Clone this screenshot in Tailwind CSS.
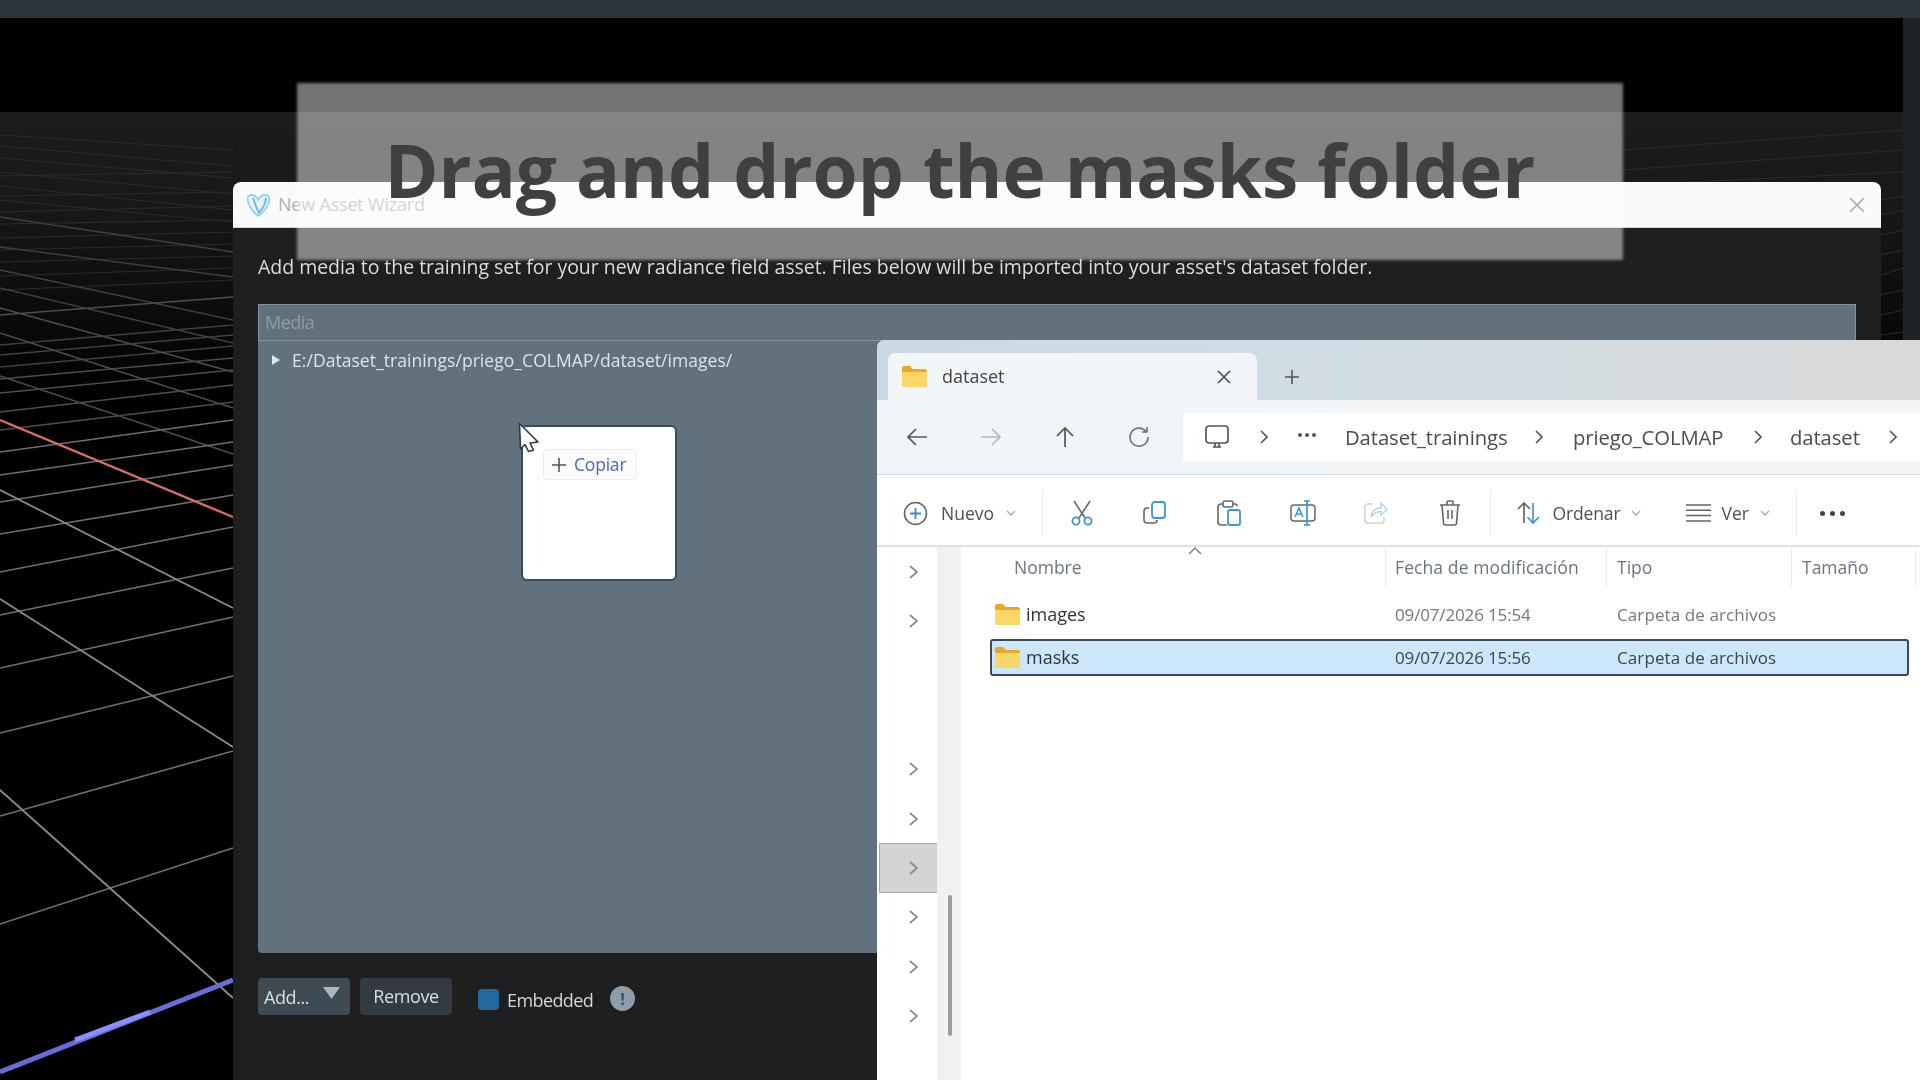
<!DOCTYPE html>
<html>
<head>
<meta charset="utf-8">
<script src="https://cdn.jsdelivr.net/npm/@tailwindcss/browser@4"></script>
</head>
<body class="bg-black">
<div class="relative w-[1920px] h-[1080px] overflow-hidden bg-black flex flex-col font-['Open_Sans',sans-serif]">
  <!-- app top bar -->
  <div class="h-[18px] shrink-0 bg-[#2b3339]"></div>
  <!-- viewport: 3D grid scene -->
  <div class="flex-1 flex">
    <div class="flex-1"></div>
    <div class="w-[17px] bg-[#1e2327]"></div>
  </div>
  <svg class="absolute left-0 top-0 blur-[0.5px]" width="1903" height="1080" viewBox="0 0 1903 1080" fill="none">
    <defs>
      <linearGradient id="haze" x1="0" y1="112" x2="0" y2="400" gradientUnits="userSpaceOnUse">
        <stop offset="0" stop-color="#1c1c1c"/>
        <stop offset="0.3" stop-color="#191919"/>
        <stop offset="0.7" stop-color="#0b0b0b"/>
        <stop offset="1" stop-color="#000"/>
      </linearGradient>
    </defs>
    <rect x="0" y="112" width="1903" height="288" fill="url(#haze)"/>
    <g stroke="#2c2c2c" stroke-width="1">
      <path d="M0 135L233 150M0 146L233 166M0 158L233 178M0 172L233 194M0 186L233 210M0 200L233 222"/>
      <path d="M0 176L233 172M0 196L233 192M0 212L233 206M0 224L233 220M0 238L233 232M0 250L233 244M0 262L233 256M0 276L233 268M0 290L233 280"/>
      <path d="M1623 150L1903 130M1623 170L1903 150M1623 185L1903 172M1881 200L1903 196M1881 215L1903 210M1881 235L1903 230M1881 255L1903 250M1881 275L1903 268M1881 295L1903 290M1881 315L1903 310M1881 335L1903 332"/>
    </g>
    <g stroke="#404040" stroke-width="1.3">
      <path d="M0 217L233 252M0 247L233 277M0 270L233 320M0 288L233 343"/>
      <path d="M0 345L233 325M0 355L233 335M0 367L233 346"/>
    </g>
    <g stroke="#4e4e4e" stroke-width="1.4">
      <path d="M0 315L233 297M0 308L233 372M0 333L233 408M0 376L233 454"/>
      <path d="M0 379L233 358M0 393L233 370M0 412L233 385M0 430L233 402"/>
    </g>
    <g stroke="#707070" stroke-width="1.6">
      <path d="M0 452L233 420M0 475L233 442M0 502L233 465M0 534L233 495M0 572L233 527M0 615L233 568M0 668L233 617M0 733L233 676M0 816L233 751M0 924L233 848"/>
    </g>
    <g stroke="#8c8c86" stroke-width="1.8">
      <path d="M0 490L233 608M0 599L233 747M0 790L233 998"/>
    </g>
    <path d="M0 420L233 517" stroke="#d96c6c" stroke-width="2.4"/>
    <path d="M0 1072L233 980" stroke="#676cd6" stroke-width="5"/>
    <path d="M75 1040L150 1012" stroke="#8a90ff" stroke-width="5"/>
  </svg>

  <!-- New Asset Wizard window -->
  <div class="absolute left-[233px] top-[182px] w-[1648px] h-[898px] flex flex-col bg-[#1f1f1f] rounded-t-lg blur-[0.5px]">
    <div class="h-[46px] shrink-0 flex items-center bg-[#fafafa] rounded-t-lg border-b border-[#d4d4d4] pl-[12px] pr-[15px]">
      <svg width="26" height="26" viewBox="0 0 26 26" fill="none">
        <path d="M3 5C6 1 11 3 13 8C15 3 21 1 24 5C26 10 20 20 13 24C8 20 1 11 3 5Z" fill="#e8f4fb" stroke="#8fcdec" stroke-width="1.6"/>
        <path d="M8 6C10 12 12 17 14 21C18 16 21 11 21 6" stroke="#6fb8e6" stroke-width="2"/>
      </svg>
      <span class="ml-[7px] text-[18px] tracking-[-0.2px] text-[#b0b0b0]">New Asset Wizard</span>
      <svg class="ml-auto" width="18" height="18" viewBox="0 0 18 18" stroke="#a8a8a8" stroke-width="1.5"><path d="M2 2L16 16M16 2L2 16"/></svg>
    </div>
    <div class="flex-1 flex flex-col px-[25px]">
      <p class="h-[76px] shrink-0 pt-[25px] text-[19.5px] leading-[27px] tracking-[-0.03px] text-[#dcdcdc]">Add media to the training set for your new radiance field asset. Files below will be imported into your asset's dataset folder.</p>
      <div class="h-[649px] shrink-0 flex flex-col bg-[#62717e] rounded-b">
        <div class="h-[37px] shrink-0 flex items-center pl-[6px] border border-[#8193a1] text-[18px] tracking-[-0.5px] text-[#8d9ca8]">Media</div>
        <div class="flex items-center h-[38px] pl-[14px] text-[17.5px] tracking-[0.05px] text-[#dfe3e6]">
          <svg width="8" height="10" viewBox="0 0 8 10" fill="#dfe3e6"><path d="M0 0L8 5L0 10Z"/></svg>
          <span class="ml-[12px]">E:/Dataset_trainings/priego_COLMAP/dataset/images/</span>
        </div>
      </div>
      <div class="mt-[25px] flex items-start text-[18px]">
        <div class="w-[92px] h-[37px] flex items-center justify-between pl-[6px] pr-[10px] rounded bg-[#3e4b54] text-[#dadfe2] tracking-[-0.4px]">
          <span class="leading-[36px]">Add...</span>
          <svg class="mb-[8px]" width="17" height="12" viewBox="0 0 17 12" fill="#a9b8c3"><path d="M0 0H17L8.5 12Z"/></svg>
        </div>
        <div class="ml-[10px] w-[92px] h-[37px] flex items-center justify-center rounded bg-[#323b42] text-[#dadfe2] tracking-[-0.4px]">Remove</div>
        <div class="ml-[26px] mt-[11px] w-[21px] h-[21px] rounded bg-[#20689f]"></div>
        <span class="ml-[8px] mt-[9px] leading-[26px] text-[#d6d6d6] tracking-[-0.6px]">Embedded</span>
        <div class="ml-[17px] mt-[8px] w-[25px] h-[25px] rounded-full bg-[#8d9dab] flex items-center justify-center text-[16px] font-bold text-[#3e4e5a]">!</div>
      </div>
    </div>
  </div>

  <!-- dragged item ghost -->
  <div class="absolute left-[521px] top-[425px] w-[156px] h-[156px] bg-white border-2 border-[#3c4a55] rounded-md blur-[0.5px]">
    <div class="ml-[20px] mt-[22px] w-[94px] h-[31px] flex items-center gap-[8px] pl-[8px] rounded bg-[#fbfbfb] border border-[#ececec]">
      <svg width="14" height="14" viewBox="0 0 14 14" stroke="#555" stroke-width="1.6"><path d="M7 0V14M0 7H14"/></svg>
      <span class="text-[17.5px] tracking-[-0.2px] leading-none text-[#4a66c4]">Copiar</span>
    </div>
  </div>
  <svg class="absolute left-[518px] top-[422px] blur-[0.3px]" width="26" height="34" viewBox="0 0 26 34">
    <path d="M1.5 1.5L2.5 27L7 22.5L10.5 29.5L15.5 28L12 21L20 20Z" fill="#fff" stroke="#2f3a44" stroke-width="1.6" stroke-linejoin="round"/>
  </svg>

  <!-- File explorer window -->
  <div class="absolute left-[877px] top-[340px] w-[1043px] h-[740px] flex flex-col bg-white rounded-tl-lg blur-[0.5px] text-[#4c4c4c]">
    <!-- tab strip -->
    <div class="h-[60px] shrink-0 flex items-end pl-[11px] rounded-tl-lg bg-gradient-to-r from-[#c9d9e4] via-[#d2dde4] to-[#d9d9d9]">
      <div class="w-[369px] h-[47px] flex items-center pl-[14px] pr-[26px] rounded-t-lg bg-[#f2f6f9]">
        <svg width="25" height="21" viewBox="0 0 25 21"><path d="M0 2a2 2 0 0 1 2-2h6l3 3h12a2 2 0 0 1 2 2v14a2 2 0 0 1-2 2H2a2 2 0 0 1-2-2Z" fill="#e9a825"/><path d="M0 6h25v13a2 2 0 0 1-2 2H2a2 2 0 0 1-2-2Z" fill="#fcd768"/></svg>
        <span class="ml-[15px] text-[18px] font-medium text-[#444]">dataset</span>
        <svg class="ml-auto" width="14" height="14" viewBox="0 0 14 14" stroke="#444" stroke-width="1.5"><path d="M1 1L13 13M13 1L1 13"/></svg>
      </div>
      <div class="h-[47px] w-[70px] flex items-center justify-center">
        <svg width="16" height="16" viewBox="0 0 16 16" stroke="#555" stroke-width="1.6"><path d="M8 1V15M1 8H15"/></svg>
      </div>
    </div>
    <!-- nav bar -->
    <div class="h-[75px] shrink-0 flex items-center bg-gradient-to-r from-[#f1f5f8] to-[#f4f5f5] border-b border-[#d5dbdf]">
      <div class="w-[306px] flex items-center pl-[10px]">
        <div class="w-[60px] flex justify-center"><svg width="22" height="20" viewBox="0 0 22 20" fill="none" stroke="#555" stroke-width="1.7"><path d="M21 10H2M10 2L2 10L10 18"/></svg></div>
        <div class="w-[74px] flex justify-center ml-[7px]"><svg width="22" height="20" viewBox="0 0 22 20" fill="none" stroke="#b5b9bc" stroke-width="1.7"><path d="M1 10H20M12 2L20 10L12 18"/></svg></div>
        <div class="w-[74px] flex justify-center"><svg width="20" height="22" viewBox="0 0 20 22" fill="none" stroke="#555" stroke-width="1.7"><path d="M10 21V2M2 10L10 2L18 10"/></svg></div>
        <div class="w-[74px] flex justify-center"><svg width="22" height="22" viewBox="0 0 22 22" fill="none" stroke="#777" stroke-width="1.7"><path d="M18 5.5A9 9 0 1 0 20 11M19 1V6H14"/></svg></div>
      </div>
      <div class="flex-1 h-[48px] flex items-center bg-white text-[#4c4c4c] text-[20.3px] tracking-[-0.1px] whitespace-nowrap">
        <svg class="ml-[21px]" width="26" height="24" viewBox="0 0 26 24" fill="none" stroke="#555" stroke-width="1.7"><rect x="2" y="1" width="22" height="17" rx="3"/><path d="M9 22H17M11 18V22M15 18V22"/></svg>
        <svg class="ml-[30px]" width="8" height="14" viewBox="0 0 8 14" fill="none" stroke="#555" stroke-width="1.6"><path d="M1 1L7 7L1 13"/></svg>
        <span class="ml-[30px] w-[18px] flex gap-[3px] mb-[4px]"><i class="w-[4px] h-[4px] rounded-full bg-[#555]"></i><i class="w-[4px] h-[4px] rounded-full bg-[#555]"></i><i class="w-[4px] h-[4px] rounded-full bg-[#555]"></i></span>
        <span class="ml-[29px] w-[171px]">Dataset_trainings</span>
        <svg class="ml-[19px]" width="8" height="14" viewBox="0 0 8 14" fill="none" stroke="#555" stroke-width="1.6"><path d="M1 1L7 7L1 13"/></svg>
        <span class="ml-[30px] w-[156px]">priego_COLMAP</span>
        <svg class="ml-[25px]" width="8" height="14" viewBox="0 0 8 14" fill="none" stroke="#555" stroke-width="1.6"><path d="M1 1L7 7L1 13"/></svg>
        <span class="ml-[28px] w-[72px]">dataset</span>
        <svg class="ml-[27px]" width="8" height="14" viewBox="0 0 8 14" fill="none" stroke="#555" stroke-width="1.6"><path d="M1 1L7 7L1 13"/></svg>
      </div>
    </div>
    <!-- toolbar -->
    <div class="h-[72px] shrink-0 pt-[6px] flex items-center border-b-2 border-[#dfe3e5] text-[17.5px] text-[#505050]">
      <svg class="ml-[26px]" width="25" height="25" viewBox="0 0 25 25" fill="none"><circle cx="12.5" cy="12.5" r="11" stroke="#666" stroke-width="1.6"/><path d="M12.5 7V18M7 12.5H18" stroke="#2f8fdc" stroke-width="1.8"/></svg>
      <span class="ml-[13px] w-[54px]">Nuevo</span>
      <svg class="ml-[11px]" width="10" height="6" viewBox="0 0 10 6" fill="none" stroke="#aaa" stroke-width="1.3"><path d="M1 1L5 5L9 1"/></svg>
      <i class="ml-[26px] w-px h-[46px] bg-[#ececec]"></i>
      <div class="ml-[2px] w-[73.6px] flex justify-center"><svg width="24" height="26" viewBox="0 0 24 26" fill="none"><path d="M4 1L15 18M20 1L9 18" stroke="#666" stroke-width="1.5"/><circle cx="6" cy="21" r="3.6" stroke="#3f94d8" stroke-width="1.8"/><circle cx="18" cy="21" r="3.6" stroke="#3f94d8" stroke-width="1.8"/></svg></div>
      <div class="w-[73.6px] flex justify-center"><svg width="24" height="24" viewBox="0 0 24 24" fill="none"><path d="M6 7H4a3 3 0 0 0-3 3v9a3 3 0 0 0 3 3h7a3 3 0 0 0 3-3" stroke="#666" stroke-width="1.6"/><rect x="9" y="1" width="13" height="16" rx="3" stroke="#3f94d8" stroke-width="1.8"/></svg></div>
      <div class="w-[73.6px] flex justify-center"><svg width="24" height="26" viewBox="0 0 24 26" fill="none"><path d="M10 25H4a3 3 0 0 1-3-3V7a3 3 0 0 1 3-3h2M16 4h2a2 2 0 0 1 2 2" stroke="#666" stroke-width="1.6"/><rect x="6" y="1" width="10" height="6" rx="2" stroke="#666" stroke-width="1.5"/><rect x="11" y="10" width="12" height="15" rx="2" stroke="#3f94d8" stroke-width="1.8"/></svg></div>
      <div class="w-[73.6px] flex justify-center"><svg width="26" height="26" viewBox="0 0 26 26" fill="none"><rect x="1" y="5" width="24" height="16" rx="3" stroke="#666" stroke-width="1.5"/><path d="M5 17L9 8L13 17M6.500 14H11.500" stroke="#3f94d8" stroke-width="1.6"/><path d="M17 1V25M14 1H20M14 25H20" stroke="#3f94d8" stroke-width="1.7"/></svg></div>
      <div class="w-[73.6px] flex justify-center opacity-40"><svg width="24" height="24" viewBox="0 0 24 24" fill="none"><path d="M9 3H4a3 3 0 0 0-3 3v13a3 3 0 0 0 3 3h13a3 3 0 0 0 3-3v-3" stroke="#888" stroke-width="1.5"/><path d="M7 16C8 9 12 7 17 7V2L23 8.500L17 14V10.500C13 10.500 10 12 7 16Z" stroke="#3f94d8" stroke-width="1.5"/></svg></div>
      <div class="w-[73.6px] flex justify-center"><svg width="22" height="26" viewBox="0 0 22 26" fill="none" stroke="#666" stroke-width="1.6"><path d="M1 5H21M8 5V2a1 1 0 0 1 1-1h4a1 1 0 0 1 1 1v3M3 5L4.500 23a2 2 0 0 0 2 2h9a2 2 0 0 0 2-2L19 5M9 10V19M13 10V19"/></svg></div>
      <i class="ml-[3px] w-px h-[46px] bg-[#ececec]"></i>
      <svg class="ml-[26px]" width="24" height="24" viewBox="0 0 24 24" fill="none" stroke-width="1.7"><path d="M7 22V2M1 8L7 2L13 8" stroke="#666"/><path d="M16 2V22M10.500 16L16 22L22 16" stroke="#3f94d8"/></svg>
      <span class="ml-[12px] w-[70px] tracking-[-0.15px]">Ordenar</span>
      <svg class="ml-[8px]" width="10" height="6" viewBox="0 0 10 6" fill="none" stroke="#aaa" stroke-width="1.3"><path d="M1 1L5 5L9 1"/></svg>
      <svg class="ml-[45px]" width="25" height="20" viewBox="0 0 25 20" stroke="#666" stroke-width="1.5"><path d="M0 2H25M0 7.300H25M0 12.600H25M0 18H25"/></svg>
      <span class="ml-[11px] w-[30px]">Ver</span>
      <svg class="ml-[8px]" width="10" height="6" viewBox="0 0 10 6" fill="none" stroke="#aaa" stroke-width="1.3"><path d="M1 1L5 5L9 1"/></svg>
      <i class="ml-[26px] w-px h-[46px] bg-[#ececec]"></i>
      <span class="ml-[23px] flex gap-[5px]"><i class="w-[5px] h-[5px] rounded-full bg-[#444]"></i><i class="w-[5px] h-[5px] rounded-full bg-[#444]"></i><i class="w-[5px] h-[5px] rounded-full bg-[#444]"></i></span>
    </div>
    <!-- body -->
    <div class="flex-1 flex min-h-0">
      <!-- nav pane -->
      <div class="w-[60px] shrink-0 flex flex-col">
        <div class="h-[49.4px] flex items-center justify-end pr-[19px]"><svg width="9" height="14" viewBox="0 0 9 14" fill="none" stroke="#8a8a8a" stroke-width="1.8"><path d="M1 1L8 7L1 13"/></svg></div>
        <div class="h-[49.4px] flex items-center justify-end pr-[19px]"><svg width="9" height="14" viewBox="0 0 9 14" fill="none" stroke="#8a8a8a" stroke-width="1.8"><path d="M1 1L8 7L1 13"/></svg></div>
        <div class="h-[98.8px]"></div>
        <div class="h-[49.4px] flex items-center justify-end pr-[19px]"><svg width="9" height="14" viewBox="0 0 9 14" fill="none" stroke="#8a8a8a" stroke-width="1.8"><path d="M1 1L8 7L1 13"/></svg></div>
        <div class="h-[49.4px] flex items-center justify-end pr-[19px]"><svg width="9" height="14" viewBox="0 0 9 14" fill="none" stroke="#8a8a8a" stroke-width="1.8"><path d="M1 1L8 7L1 13"/></svg></div>
        <div class="h-[49.4px] ml-[2px] flex items-center justify-end pr-[19px] bg-[#d4d4d4] border border-r-0 border-[#a9a9a9]"><svg width="9" height="14" viewBox="0 0 9 14" fill="none" stroke="#8a8a8a" stroke-width="1.8"><path d="M1 1L8 7L1 13"/></svg></div>
        <div class="h-[49.4px] flex items-center justify-end pr-[19px]"><svg width="9" height="14" viewBox="0 0 9 14" fill="none" stroke="#8a8a8a" stroke-width="1.8"><path d="M1 1L8 7L1 13"/></svg></div>
        <div class="h-[49.4px] flex items-center justify-end pr-[19px]"><svg width="9" height="14" viewBox="0 0 9 14" fill="none" stroke="#8a8a8a" stroke-width="1.8"><path d="M1 1L8 7L1 13"/></svg></div>
        <div class="h-[49.4px] flex items-center justify-end pr-[19px]"><svg width="9" height="14" viewBox="0 0 9 14" fill="none" stroke="#8a8a8a" stroke-width="1.8"><path d="M1 1L8 7L1 13"/></svg></div>
      </div>
      <!-- scroll strip -->
      <div class="w-[24px] shrink-0 bg-[#f1f1f1] pt-[348px] pl-[11px]">
        <div class="w-[4px] h-[141px] rounded-full bg-[#9a9a9a]"></div>
      </div>
      <!-- file list -->
      <div class="flex-1 min-w-0 relative pl-[29px] pr-[11px]">
        <svg class="absolute left-[227px] top-[0px]" width="14" height="8" viewBox="0 0 14 8" fill="none" stroke="#888" stroke-width="1.6"><path d="M1 7L7 1L13 7"/></svg>
        <div class="h-[40px] flex items-center text-[17.5px] text-[#6a7480] whitespace-nowrap">
          <span class="ml-[24px] w-[371px] h-full shrink-0 flex items-center">Nombre</span>
          <span class="w-[221px] h-full shrink-0 flex items-center pl-[9px] tracking-[0.1px] border-l border-[#ececec]">Fecha de modificación</span>
          <span class="w-[185px] h-full shrink-0 flex items-center pl-[10px] border-l border-[#ececec]">Tipo</span>
          <span class="w-[124px] h-full shrink-0 flex items-center pl-[10px] border-l border-[#ececec]">Tamaño</span>
          <i class="w-px h-full shrink-0 bg-[#ececec]"></i>
        </div>
        <div class="mt-[9px] h-[37px] flex items-center text-[17px] text-[#777]">
          <svg class="ml-[5px]" width="25" height="21" viewBox="0 0 25 21"><path d="M0 2a2 2 0 0 1 2-2h6l3 3h12a2 2 0 0 1 2 2v14a2 2 0 0 1-2 2H2a2 2 0 0 1-2-2Z" fill="#e9a825"/><path d="M0 6h25v13a2 2 0 0 1-2 2H2a2 2 0 0 1-2-2Z" fill="#fcd768"/></svg>
          <span class="ml-[6px] w-[369px] text-[18px] text-[#333]">images</span>
          <span class="w-[222px] tracking-[-0.15px]">09/07/2026 15:54</span>
          <span class="tracking-[0.1px]">Carpeta de archivos</span>
        </div>
        <div class="mt-[6px] h-[37px] flex items-center text-[17px] text-[#3b4650] bg-[#cce6fb] border-2 border-[#3a4a58] rounded-[3px]">
          <svg class="ml-[3px]" width="25" height="21" viewBox="0 0 25 21"><path d="M0 2a2 2 0 0 1 2-2h6l3 3h12a2 2 0 0 1 2 2v14a2 2 0 0 1-2 2H2a2 2 0 0 1-2-2Z" fill="#e9a825"/><path d="M0 6h25v13a2 2 0 0 1-2 2H2a2 2 0 0 1-2-2Z" fill="#fcd768"/></svg>
          <span class="ml-[6px] w-[369px] text-[18px] text-[#2c3640]">masks</span>
          <span class="w-[222px] tracking-[-0.15px]">09/07/2026 15:56</span>
          <span class="tracking-[0.1px]">Carpeta de archivos</span>
        </div>
      </div>
    </div>
  </div>

  <!-- caption banner -->
  <div class="absolute left-[297px] top-[83px] w-[1326px] h-[177px] bg-white/46 blur-[1.5px]"></div>
  <div class="absolute left-[297px] top-[81px] w-[1326px] h-[177px] flex items-center justify-center text-[73px] font-bold leading-none text-[#404040]">Drag and drop the masks folder</div>
</div>
</body>
</html>
